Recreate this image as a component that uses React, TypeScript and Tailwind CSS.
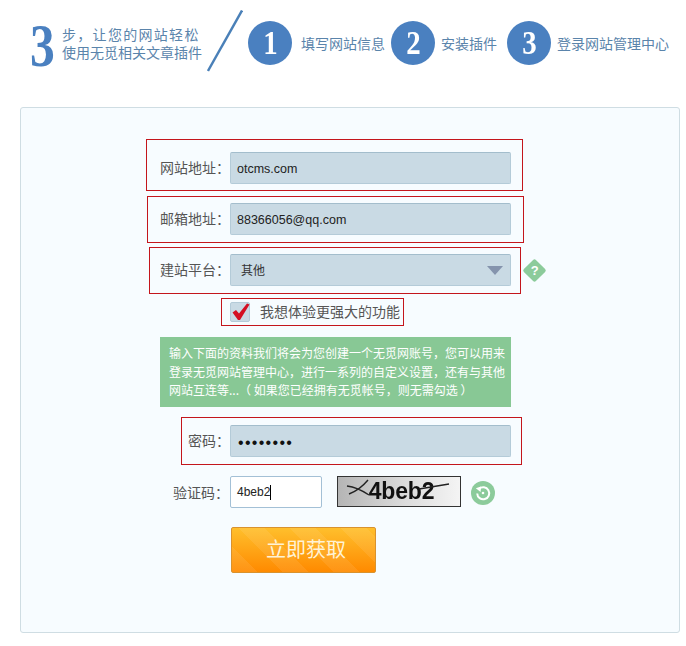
import React from 'react';

const cjk = "font-['Noto_Sans_CJK_SC','Noto_Sans',sans-serif]";
const latin = "font-['Liberation_Sans','Noto_Sans_CJK_SC',sans-serif]";
const inputBox = 'h-[32px] rounded-[2px] border border-[#b4cbd8] border-t-[#a3bdcc] bg-[#c9dae4] flex items-center';

const StepBall: React.FC<{ n: string }> = ({ n }) => (
    <div className="w-[44px] h-[44px] shrink-0 rounded-full bg-[#4a80c0] flex items-center justify-center text-white font-['Liberation_Serif',serif] font-bold text-[34px] leading-none">
        <span className="scale-x-[0.85]">{n}</span>
    </div>
);

const Label: React.FC<{ text: string; className: string }> = ({ text, className }) => (
    <div className={`${className} shrink-0 text-[14px] leading-[30px] text-[#555] ${cjk}`}>{text}</div>
);

const App: React.FC = () => {
    return (
        <div className={`w-[686px] h-[646px] bg-white overflow-hidden ${cjk}`}>
            {/* Steps header */}
            <div className="h-[107px] pl-[30px] pt-[10px] flex items-start text-[#5a84ab]">
                <div className="w-[32px] h-[61px] pt-[4px] shrink-0">
                    <div className="w-[30px] origin-left scale-x-[0.8] font-['Liberation_Serif',serif] font-bold text-[62px] leading-[62px] text-[#4a80c0]">3</div>
                </div>
                <div className="w-[145px] pt-[15px] shrink-0 text-[14px] leading-[18px]">
                    <div className="tracking-[1.3px] whitespace-nowrap">步，让您的网站轻松</div>
                    <div className="whitespace-nowrap">使用无觅相关文章插件</div>
                </div>
                <svg width="36" height="62" viewBox="0 0 36 62" className="shrink-0">
                    <line x1="35" y1="0.5" x2="1" y2="61" stroke="#4a80b8" strokeWidth="2.4" />
                </svg>
                <div className="flex items-center pt-[11px] ml-[5px]">
                    <StepBall n="1" />
                    <span className="w-[90px] ml-[9px] text-[14px] whitespace-nowrap">填写网站信息</span>
                    <StepBall n="2" />
                    <span className="w-[66px] ml-[6px] text-[14px] whitespace-nowrap">安装插件</span>
                    <StepBall n="3" />
                    <span className="ml-[6px] text-[14px] whitespace-nowrap">登录网站管理中心</span>
                </div>
            </div>

            {/* Form panel */}
            <div className="ml-[20px] w-[660px] h-[526px] rounded-[3px] border border-[#cfdde3] bg-[#f7fcff] flex flex-col items-start pt-[31px]">
                <div className="ml-[125px] w-[377px] h-[52px] border border-[#c4161c] pt-[12px] pl-[13px] flex items-start">
                    <Label text="网站地址：" className="w-[70px]" />
                    <div className={`${inputBox} w-[281px] pl-[6px] pt-[2px] text-[12.5px] text-[#222] ${latin}`}>otcms.com</div>
                </div>

                <div className="ml-[126px] mt-[5px] w-[377px] h-[47px] border border-[#c4161c] pt-[6px] pl-[12px] flex items-start">
                    <Label text="邮箱地址：" className="w-[70px]" />
                    <div className={`${inputBox} w-[281px] pl-[6px] pt-[2px] text-[12.5px] text-[#222] ${latin}`}>88366056@qq.com</div>
                </div>

                <div className="ml-[128px] mt-[4px] flex items-center">
                    <div className="w-[372px] h-[47px] border border-[#c4161c] pt-[6px] pl-[10px] flex items-start">
                        <Label text="建站平台：" className="w-[70px]" />
                        <div className={`${inputBox} w-[281px] pl-[10px] pr-[7px] justify-between text-[12px] text-[#333]`}>
                            <span>其他</span>
                            <svg width="16" height="9" viewBox="0 0 16 9"><path d="M0 0H16L8 9Z" fill="#8594ad" /></svg>
                        </div>
                    </div>
                    <div className="ml-[5px] w-[17px] h-[17px] rotate-45 rounded-[2px] bg-[#8ccb9b] flex items-center justify-center">
                        <span className={`-rotate-45 text-white font-bold text-[13px] leading-none ${latin}`}>?</span>
                    </div>
                </div>

                <div className="ml-[200px] mt-[4px] w-[183px] h-[28px] border border-[#c4161c] pl-[8px] flex items-center">
                    <div className="relative w-[20px] h-[20px] rounded-[2px] bg-[#c9dae4] border border-[#b4cbd8] shrink-0">
                        <svg width="20" height="20" viewBox="0 0 20 20" className="absolute -left-[1px] -top-[1px]">
                            <path d="M2.5 10.5L6 8L9 11.5L17 1.5L19.5 2.5L10 18H8Z" fill="#d40f22" />
                        </svg>
                    </div>
                    <span className="ml-[10px] pb-[2px] text-[14px] text-[#555] whitespace-nowrap">我想体验更强大的功能</span>
                </div>

                <div className="ml-[139px] mt-[11px] w-[351px] h-[70px] bg-[#88c895] px-[9px] pt-[7px] text-[12px] leading-[18.5px] text-white whitespace-nowrap">
                    <div>输入下面的资料我们将会为您创建一个无觅网账号，您可以用来</div>
                    <div>登录无觅网站管理中心，进行一系列的自定义设置，还有与其他</div>
                    <div>网站互连等...（ 如果您已经拥有无觅帐号，则无需勾选 ）</div>
                </div>

                <div className="ml-[160px] mt-[10px] w-[341px] h-[48px] border border-[#c4161c] pt-[7px] pl-[6px] flex items-start">
                    <Label text="密码：" className="w-[42px]" />
                    <div className={`${inputBox} w-[281px] pl-[7px] pt-[3px] text-[16px] tracking-[1.3px] text-[#111] ${latin}`}>••••••••</div>
                </div>

                <div className="ml-[152px] mt-[11px] flex items-start">
                    <div className={`w-[57px] shrink-0 text-[14px] leading-[32px] text-[#555] ${cjk}`}>验证码：</div>
                    <div className={`w-[92px] h-[32px] rounded-[2px] border border-[#a3c0d6] bg-white pl-[6px] flex items-center text-[12px] text-[#222] ${latin}`}>
                        4beb2<span className="w-[1px] h-[15px] bg-black" />
                    </div>
                    <div className="relative ml-[15px] w-[124px] h-[31px] border border-[#333] bg-[linear-gradient(90deg,#b5b5b5,#dcdcdc_55%,#f4f4f4)] flex items-center justify-center overflow-hidden">
                        <span className={`pl-[5px] text-[23px] leading-none font-bold text-[#111] tracking-[-0.2px] blur-[0.4px] ${latin}`}>4beb2</span>
                        <svg width="124" height="31" viewBox="0 0 124 31" className="absolute -left-[1px] -top-[1px]">
                            <path d="M10 10C18 11 26 15 32 19M31 4C26 10 20 15 12 18M82 13L112 8" stroke="#222" strokeWidth="1.4" fill="none" />
                        </svg>
                    </div>
                    <div className="ml-[10px] mt-[5px] w-[24px] h-[24px] rounded-full bg-[#8ccb9b] flex items-center justify-center">
                        <svg width="16" height="16" viewBox="0 0 16 16" fill="none">
                            <path d="M4 4A6 6 0 1 1 2.2 8.5" stroke="#fff" strokeWidth="2" />
                            <path d="M0.8 3.2L6 1.5L5.6 7Z" fill="#fff" />
                            <circle cx="8" cy="8" r="1.3" fill="#fff" />
                        </svg>
                    </div>
                </div>

                <div className="ml-[210px] mt-[19px] w-[145px] h-[46px] rounded-[2px] border border-[#d9922e] pb-[2px] pl-[5px] bg-[repeating-linear-gradient(45deg,rgba(255,255,255,0.08)_0_18px,rgba(255,255,255,0)_18px_36px),linear-gradient(180deg,#ffbf2c,#ff8a00)] flex items-center justify-center text-[20px] text-[#fff3d6]">
                    立即获取
                </div>
            </div>
        </div>
    );
};

export default App;
